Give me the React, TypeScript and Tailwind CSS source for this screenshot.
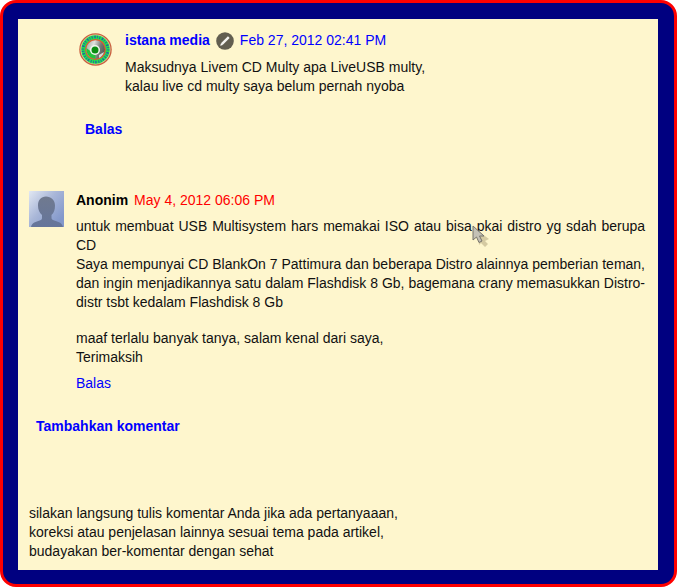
import type { ReactNode } from 'react';

function LogoAvatar() {
  return (
    <svg viewBox="0 0 66 66" className="mt-0.5 size-[33px] shrink-0" aria-hidden="true">
      <defs>
        <linearGradient id="disc" x1="0" y1="0.3" x2="1" y2="0.6">
          <stop offset="0" stopColor="#a9b0a9" />
          <stop offset="0.35" stopColor="#dfe2df" />
          <stop offset="0.7" stopColor="#767a76" />
          <stop offset="1" stopColor="#555955" />
        </linearGradient>
      </defs>
      <circle cx="33" cy="33" r="32.5" fill="#c9603f" />
      <circle cx="33" cy="33" r="30" fill="#dccf9f" />
      <circle cx="33" cy="33" r="28.5" fill="#22e04e" />
      <circle
        cx="33"
        cy="33"
        r="25"
        fill="none"
        stroke="#1f62a8"
        strokeWidth="5"
        strokeDasharray="2 3.4 3 2.6 1.6 3"
      />
      <circle cx="33" cy="33" r="21" fill="#dd5a30" />
      <circle cx="33" cy="33" r="18.5" fill="url(#disc)" />
      <path d="M15 30a18.5 18.5 0 0 0 18 21.5l0-8-11-8z" fill="#25c23a" />
      <path d="M40 44l10-6a18.5 18.5 0 0 1-10 12z" fill="#d9dbd9" />
      <circle cx="32" cy="34" r="10" fill="#f1f8ef" />
      <circle cx="32" cy="34" r="7" fill="#0a8c12" />
    </svg>
  );
}

function AnonymousAvatar() {
  return (
    <svg viewBox="0 0 35 36" className="h-9 w-[35px] shrink-0" aria-hidden="true">
      <defs>
        <linearGradient id="sky" x1="0" y1="0" x2="0.9" y2="0.8">
          <stop offset="0" stopColor="#e2e8f2" />
          <stop offset="0.5" stopColor="#a9b7d8" />
          <stop offset="1" stopColor="#8398cb" />
        </linearGradient>
        <linearGradient id="person" x1="0" y1="0" x2="0" y2="1">
          <stop offset="0" stopColor="#707a8f" />
          <stop offset="1" stopColor="#65759b" />
        </linearGradient>
      </defs>
      <rect width="35" height="36" fill="url(#sky)" />
      <path
        d="M17 5.5c-5 0-8 3.5-8 9 0 4 1.5 7.5 4 9.5v3c0 1.5-1 2-3 2.7-4 1.3-7 2-8 6.3h32c-1-4.3-4-5-8-6.3-2-.7-3.500-1.2-3.500-2.7v-3c2.500-2 3.500-5.500 3.500-9.500 0-5.500-4-9-9-9z"
        fill="url(#person)"
      />
    </svg>
  );
}

function AuthorBadge() {
  return (
    <svg viewBox="0 0 18 18" className="size-[18px]" aria-hidden="true">
      <circle cx="9" cy="9" r="8.8" fill="#625e50" />
      <path d="M4.2 13.8l.8-2.6 1.8 1.8z" fill="#fff" />
      <path d="M5.8 12.2l7-7" stroke="#f4f3ef" strokeWidth="2.4" />
    </svg>
  );
}

function Pointer() {
  return (
    <svg viewBox="0 0 18 22" className="absolute top-2 left-[396px] h-[22px] w-[18px]" aria-hidden="true">
      <path d="M6 6l11 8-4 2 3 3-3 3-4-4-2 2z" fill="#b9ad85" opacity="0.6" />
      <path
        d="M1 1v14l3.5-3 2.5 5.5 3-1.5-2.5-5h4.500z"
        fill="#c4c1b6"
        stroke="#77746b"
        strokeLinejoin="round"
      />
    </svg>
  );
}

type CommentProps = {
  avatar: ReactNode;
  header: ReactNode;
  children: ReactNode;
  className: string;
};

function Comment({ avatar, header, children, className }: CommentProps) {
  return (
    <article className={`flex ${className}`}>
      {avatar}
      <div className="min-w-0 flex-1">
        <header className="flex h-[19px] items-center gap-1.5">{header}</header>
        {children}
      </div>
    </article>
  );
}

export default function App() {
  return (
    <div className="rounded-2xl border-3 border-[#ff0000] bg-[#000080] pt-4 pr-4 pb-3.5 pl-[15px] font-['Liberation_Sans',Arial,sans-serif] text-[14px] leading-[19px] text-[#111]">
      <main className="bg-[#fef6cd] pt-3 pr-[13px] pb-[9px] pl-[11px]">
        <Comment
          className="gap-[13px] pl-[50px]"
          avatar={<LogoAvatar />}
          header={
            <>
              <a href="#istana-media" className="font-bold text-[#0000ff]">
                istana media
              </a>
              <AuthorBadge />
              <a href="#comment-1" className="text-[#0000ff]">
                Feb 27, 2012 02:41 PM
              </a>
            </>
          }
        >
          <p className="mt-2">
            Maksudnya Livem CD Multy apa LiveUSB multy,
            <br />
            kalau live cd multy saya belum pernah nyoba
          </p>
        </Comment>
        <a href="#reply-1" className="mt-6 ml-14 block w-fit font-bold text-[#0000ff]">
          Balas
        </a>

        <Comment
          className="mt-[52px] gap-3"
          avatar={<AnonymousAvatar />}
          header={
            <>
              <strong className="text-black">Anonim</strong>
              <a href="#comment-2" className="text-[#ff0000]">
                May 4, 2012 06:06 PM
              </a>
            </>
          }
        >
          <div className="relative mt-[7px] text-justify">
            <p>
              untuk membuat USB Multisystem hars memakai ISO atau bisa pkai distro yg sdah berupa CD
              <br />
              Saya mempunyai CD BlankOn 7 Pattimura dan beberapa Distro alainnya pemberian teman, dan
              ingin menjadikannya satu dalam Flashdisk 8 Gb, bagemana crany memasukkan Distro-distr
              tsbt kedalam Flashdisk 8 Gb
            </p>
            <p className="mt-[17px]">
              maaf terlalu banyak tanya, salam kenal dari saya,
              <br />
              Terimaksih
            </p>
            <Pointer />
          </div>
          <a href="#reply-2" className="mt-[7px] block w-fit text-[#0000ff]">
            Balas
          </a>
        </Comment>
        <a href="#add-comment" className="mt-6 ml-[7px] block w-fit font-bold text-[#0000ff]">
          Tambahkan komentar
        </a>

        <p className="mt-[68px]">
          silakan langsung tulis komentar Anda jika ada pertanyaaan,
          <br />
          koreksi atau penjelasan lainnya sesuai tema pada artikel,
          <br />
          budayakan ber-komentar dengan sehat
        </p>
      </main>
    </div>
  );
}
